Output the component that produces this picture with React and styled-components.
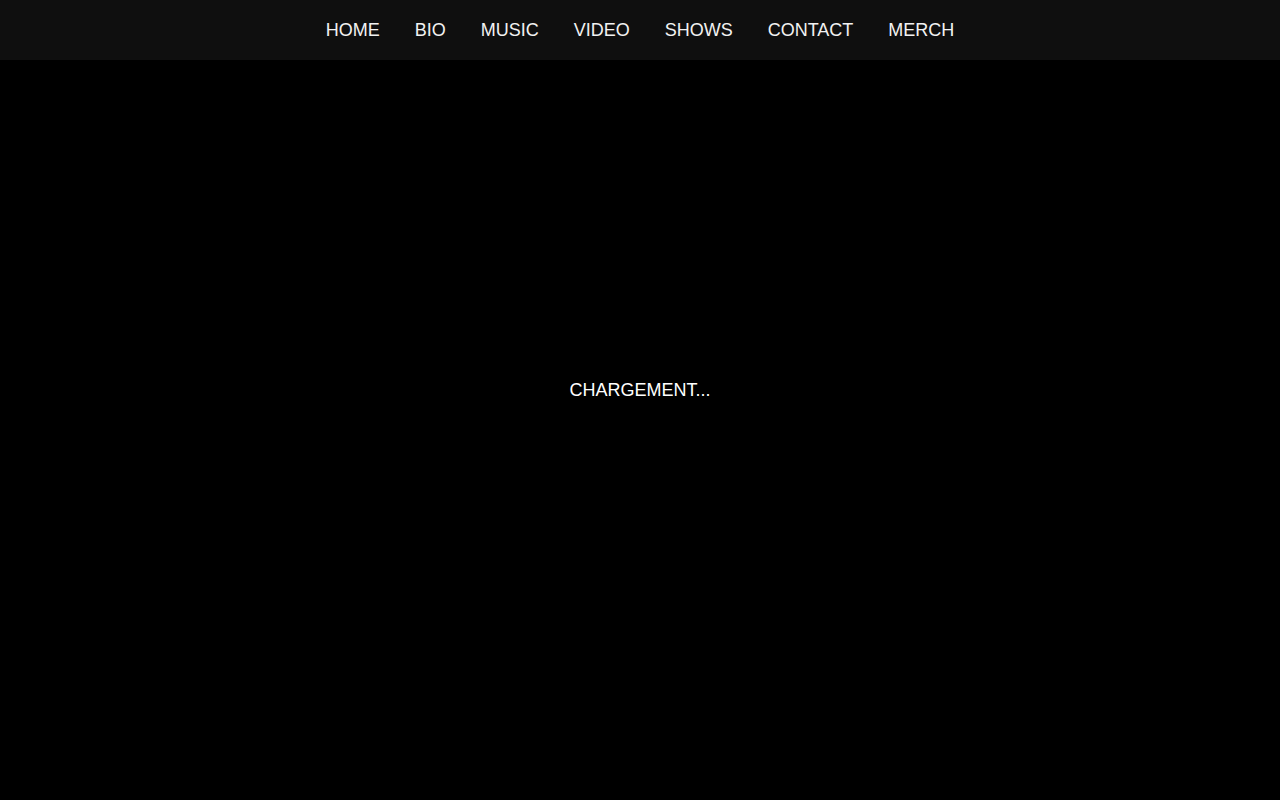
import React from "react";
import styled, { createGlobalStyle } from "styled-components";

const Global = createGlobalStyle`
  html, body { margin: 0; padding: 0; background: #000; }
  body { font-family: "Liberation Sans", Arial, sans-serif; color: #fff; }
`;

const Header = styled.header`
  height: 60px;
  background: #0f0f0f;
  display: flex;
  justify-content: center;
  align-items: center;
`;

const Nav = styled.nav`
  display: flex;
  gap: 35px;
`;

const NavLink = styled.a`
  color: #f2f2f2;
  font-size: 18px;
  text-decoration: none;
  text-transform: uppercase;
  line-height: 1;
  cursor: pointer;
`;

const Main = styled.main`
  height: calc(100vh - 60px);
  box-sizing: border-box;
  padding-bottom: 80px;
  display: flex;
  align-items: center;
  justify-content: center;
  background: #000;
`;

const Loading = styled.div`
  font-size: 18px;
  color: #fff;
  letter-spacing: 0;
`;

const items = ["HOME", "BIO", "MUSIC", "VIDEO", "SHOWS", "CONTACT", "MERCH"];

export default function App() {
  return (
    <>
      <Global />
      <Header>
        <Nav>
          {items.map((i) => (
            <NavLink key={i}>{i}</NavLink>
          ))}
        </Nav>
      </Header>
      <Main>
        <Loading>CHARGEMENT...</Loading>
      </Main>
    </>
  );
}
